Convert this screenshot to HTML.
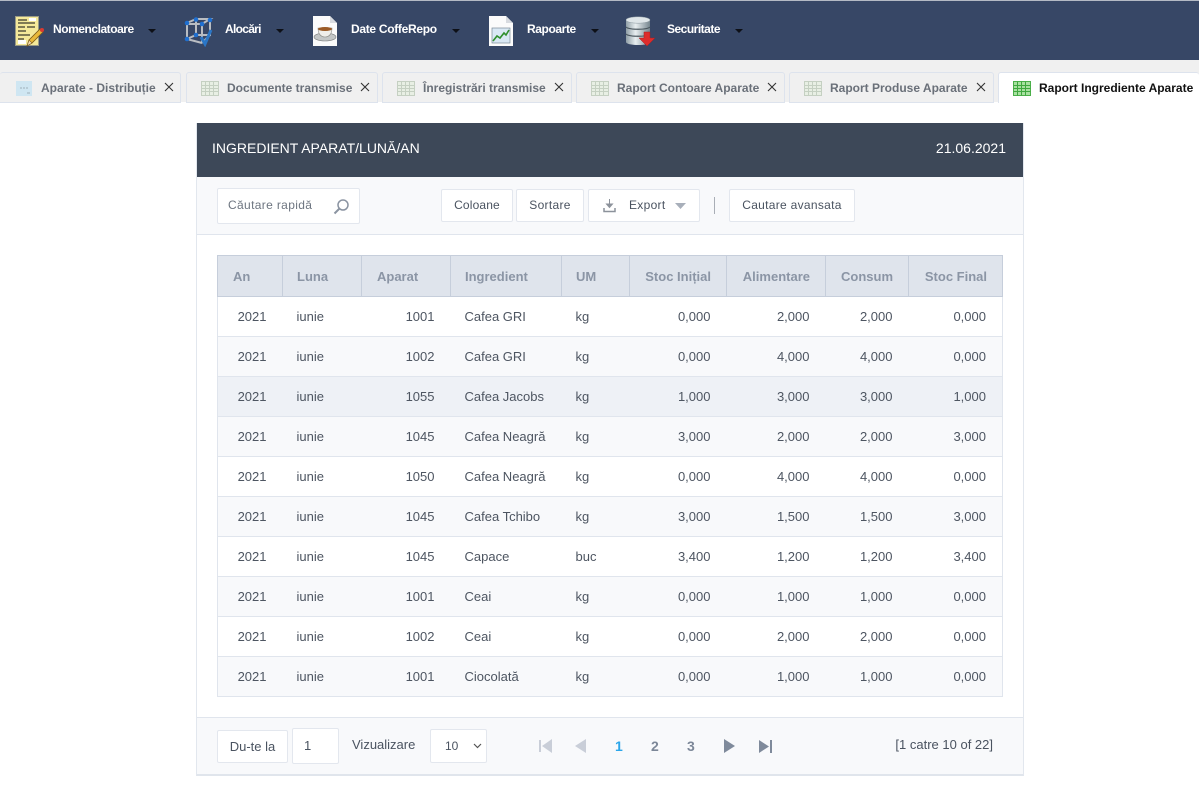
<!DOCTYPE html>
<html><head><meta charset="utf-8"><title>Raport Ingrediente Aparate</title>
<style>
html,body{margin:0;padding:0;width:1199px;height:808px;overflow:hidden;background:#fff;font-family:"Liberation Sans",Arial,sans-serif}
*{box-sizing:border-box}
.a{position:absolute;white-space:nowrap}
#top{position:absolute;left:0;top:0;width:1199px;height:60px;background:#374766;border-top:1px solid #b4bac4}
#strip{position:absolute;left:0;top:60px;width:1199px;height:42px;background:#f0f0f0}
.nav{position:absolute;top:22px;color:#fff;font-size:12px;font-weight:bold;line-height:14px;white-space:nowrap}
.car{position:absolute;top:29px;width:0;height:0;border-left:4px solid transparent;border-right:4px solid transparent;border-top:4px solid #0d1017}
.tab{position:absolute;top:72px;height:31px;background:#f0f0f0;border:1px solid #dde3ed;border-radius:3px 3px 0 0}
.tab.on{background:#fff;border-bottom:0;height:31px}
.tt{position:absolute;top:81px;font-size:12px;font-weight:bold;line-height:14px;color:#6a7079;white-space:nowrap}
.x{position:absolute;top:82px}
.ti{position:absolute;top:81px}
#panel{position:absolute;left:196px;top:123px;width:828px;height:653px;border:1px solid #e2e7ee;border-top:0;border-bottom:2px solid #e0e5ec}
.btn{position:absolute;background:#fff;border:1px solid #e3e7ee;border-radius:2px;font-size:12px;letter-spacing:.3px;color:#4a5360;text-align:center;white-space:nowrap}
table{position:absolute;left:217px;top:255px;width:785px;border-collapse:collapse;table-layout:fixed;font-size:13px}
th{height:41px;background:#dfe4ec;border:1px solid #c6cedb;color:#8b95a5;font-weight:bold;padding:0 15px;text-align:left;font-size:13px}
th.r{text-align:right}
td{height:40px;padding:0 15px;border-top:0;border-bottom:1px solid #e0e5ed;color:#4d5561;white-space:nowrap}
tr td:first-child{border-left:1px solid #e0e5ed}
tr td:last-child{border-right:1px solid #e0e5ed}
td.r{text-align:right;padding-right:16px}
td.l{padding-left:14px}
tr.e td{background:#f8f9fb}
tr.s td{background:#eef1f6}
</style></head><body>
<div id="top"></div>
<div id="strip"></div>

<!-- Nomenclatoare icon -->
<svg class="a" style="left:15px;top:16px" width="29" height="31" viewBox="0 0 29 31"><rect x=".5" y=".5" width="23" height="29" fill="#f4e99a" stroke="#9a9a86"/><path d="M3 4h9M3 7h17M3 11h7M12 11h8M3 15h8M3 19h12M3 23h6" stroke="#3a3a2c" stroke-width="1.2"/><rect x="14" y="2" width="7" height="3" fill="#fff"/><rect x="3" y="24" width="8" height="4" fill="#fff"/><path d="M12 30l2-6L25 13l3 3L17 27z" fill="#e9b93a" stroke="#7a5a18" stroke-width=".8"/><path d="M12 30l2-6 3 3z" fill="#f3dcb0" stroke="#7a5a18" stroke-width=".6"/><circle cx="27" cy="14" r="2" fill="#d83a32"/></svg>
<div class="nav" style="left:53px;letter-spacing:-.46px">Nomenclatoare</div><div class="car" style="left:148px"></div>

<!-- Alocari icon -->
<svg class="a" style="left:184px;top:17px" width="30" height="30" viewBox="0 0 30 30"><g fill="none" stroke="#b9bdc2" stroke-width="2"><path d="M3 6L12 2H26L18 7H3V22L12 18H26V3M12 2V18M18 7V26M3 22L18 26M26 18L18 26"/></g><g fill="#1f6fd0"><circle cx="3" cy="6" r="2.300"/><circle cx="12" cy="2.500" r="2.300"/><circle cx="26" cy="3" r="2.300"/><circle cx="18" cy="7" r="2.300"/><circle cx="3" cy="22" r="2.300"/><circle cx="12" cy="18" r="2.300"/></g><path d="M17 20l4 7 6-14" fill="none" stroke="#2a76c6" stroke-width="3"/></svg>
<div class="nav" style="left:225px;letter-spacing:-.7px">Alocări</div><div class="car" style="left:276px"></div>

<!-- Date icon -->
<svg class="a" style="left:313px;top:16px" width="25" height="30" viewBox="0 0 25 30"><path d="M0 0H17L24 7V30H0z" fill="#fbfbfb"/><path d="M17 0V7H24z" fill="#d8dbe0"/><ellipse cx="12" cy="21" rx="11" ry="4" fill="#c3c6c6" stroke="#7a7c7c" stroke-width=".6"/><path d="M5 12h14c0 6-3 9-7 9s-7-3-7-9z" fill="#efeeea" stroke="#8a8a85" stroke-width=".6"/><ellipse cx="12" cy="13" rx="7" ry="2" fill="#9a5a26"/></svg>
<div class="nav" style="left:351px;letter-spacing:-.3px">Date CoffeRepo</div><div class="car" style="left:452px"></div>

<!-- Rapoarte icon -->
<svg class="a" style="left:489px;top:16px" width="25" height="30" viewBox="0 0 25 30"><path d="M0 0H17L24 7V30H0z" fill="#fbfbfb"/><path d="M17 0V7H24z" fill="#d8dbe0"/><rect x="3" y="12" width="18" height="15" fill="#d9e8f4" stroke="#7b8a96" stroke-width=".7"/><path d="M4 25l4-5 3 2 4-5 2 2 3-5" fill="none" stroke="#2f8f2c" stroke-width="1.600"/></svg>
<div class="nav" style="left:527px;letter-spacing:-.4px">Rapoarte</div><div class="car" style="left:591px"></div>

<!-- Securitate icon -->
<svg class="a" style="left:626px;top:16px" width="30" height="31" viewBox="0 0 30 31"><defs><linearGradient id="g" x1="0" x2="1" y1="0" y2="0"><stop offset="0" stop-color="#8f9ea6"/><stop offset=".4" stop-color="#e8eef0"/><stop offset="1" stop-color="#75858e"/></linearGradient></defs><path d="M0 4C0 0 24 0 24 4V26C24 30 0 30 0 26z" fill="url(#g)"/><ellipse cx="12" cy="4" rx="12" ry="3.200" fill="#dfe6e9" stroke="#8a979e" stroke-width=".5"/><path d="M0 11C3 14 21 14 24 11M0 18C3 21 21 21 24 18" fill="none" stroke="#4a565e" stroke-width="1.200"/><path d="M18 16h6v6h5l-8 8-8-8h5z" fill="#dd2c2c" stroke="#a81e1e" stroke-width=".5"/></svg>
<div class="nav" style="left:667px;letter-spacing:-.5px">Securitate</div><div class="car" style="left:735px"></div>

<!-- Tabs -->
<div class="tab" style="left:0;width:181px;border-left:0"></div>
<div class="tab" style="left:186px;width:192px"></div>
<div class="tab" style="left:382px;width:190px"></div>
<div class="tab" style="left:576px;width:209px"></div>
<div class="tab" style="left:789px;width:205px"></div>
<div class="tab on" style="left:998px;width:201px;border-right:0"></div>

<svg class="ti" style="left:16px" width="16" height="15" viewBox="0 0 16 15"><rect width="16" height="15" fill="#cfe6f2"/><path d="M4 7h2M7 7h2M10 7h2M11 12h3" stroke="#9fb0ba"/></svg>
<div class="tt" style="left:41px">Aparate - Distribuție</div>
<svg class="x" style="left:164px" width="10" height="10"><path d="M1 1l8 8M9 1l-8 8" stroke="#333" stroke-width="1.100"/></svg>

<svg class="ti" style="left:201px" width="18" height="15" viewBox="0 0 18 15"><use href="#gr"/></svg>
<div class="tt" style="left:227px">Documente transmise</div>
<svg class="x" style="left:360px" width="10" height="10"><path d="M1 1l8 8M9 1l-8 8" stroke="#333" stroke-width="1.100"/></svg>

<svg class="ti" style="left:397px" width="18" height="15" viewBox="0 0 18 15"><use href="#gr"/></svg>
<div class="tt" style="left:423px">Înregistrări transmise</div>
<svg class="x" style="left:554px" width="10" height="10"><path d="M1 1l8 8M9 1l-8 8" stroke="#333" stroke-width="1.100"/></svg>

<svg class="ti" style="left:591px" width="18" height="15" viewBox="0 0 18 15"><use href="#gr"/></svg>
<div class="tt" style="left:617px">Raport Contoare Aparate</div>
<svg class="x" style="left:767px" width="10" height="10"><path d="M1 1l8 8M9 1l-8 8" stroke="#333" stroke-width="1.100"/></svg>

<svg class="ti" style="left:804px" width="18" height="15" viewBox="0 0 18 15"><use href="#gr"/></svg>
<div class="tt" style="left:830px">Raport Produse Aparate</div>
<svg class="x" style="left:976px" width="10" height="10"><path d="M1 1l8 8M9 1l-8 8" stroke="#333" stroke-width="1.100"/></svg>

<svg class="ti" style="left:1013px" width="18" height="15" viewBox="0 0 18 15"><rect x=".5" y=".5" width="17" height="14" fill="#a8e0a0" stroke="#4cb04a"/><path d="M.5 4.500h17M.5 7.500h17M.5 10.500h17M4.500 .5v14M8.500 .5v14M12.500 .5v14" stroke="#3fa83f" fill="none"/></svg>
<div class="tt" style="left:1039px;color:#111">Raport Ingrediente Aparate</div>

<svg width="0" height="0" style="position:absolute"><defs><g id="gr"><rect x=".5" y=".5" width="17" height="14" fill="#e8efe4" stroke="#c5d0c2"/><path d="M.5 4.500h17M.5 7.500h17M.5 10.500h17M4.500 .5v14M8.500 .5v14M12.500 .5v14" stroke="#c5d0c2" fill="none"/></g></defs></svg>

<!-- Panel -->
<div id="panel"></div>
<div class="a" style="left:197px;top:123px;width:826px;height:54px;background:#3d4858"></div>
<div class="a" style="left:212px;top:140px;color:#fff;font-size:14px;line-height:16px">INGREDIENT APARAT/LUNĂ/AN</div>
<div class="a" style="right:193px;top:140px;color:#fff;font-size:14px;line-height:16px">21.06.2021</div>
<div class="a" style="left:197px;top:177px;width:826px;height:58px;background:#f8f9fb;border-bottom:1px solid #e0e5ed"></div>

<div class="btn" style="left:217px;top:188px;width:143px;height:36px;line-height:33px;text-align:left;padding-left:10px;color:#6d7580;letter-spacing:.35px">Căutare rapidă</div>
<svg class="a" style="left:333px;top:198px" width="17" height="17" viewBox="0 0 17 17"><circle cx="10" cy="7" r="5" fill="none" stroke="#8b94a2" stroke-width="1.500"/><path d="M6.500 10.500L1.500 15.500" stroke="#8b94a2" stroke-width="2"/></svg>
<div class="btn" style="left:441px;top:189px;width:72px;height:33px;line-height:31px;letter-spacing:.15px">Coloane</div>
<div class="btn" style="left:516px;top:189px;width:68px;height:33px;line-height:31px">Sortare</div>
<div class="btn" style="left:588px;top:189px;width:112px;height:33px;line-height:31px;text-align:left;padding-left:40px">Export</div>
<svg class="a" style="left:603px;top:199px" width="13" height="14" viewBox="0 0 13 14"><path d="M6.500 0v7M3.500 5l3 3.500 3-3.500z" stroke="#8c929b" fill="#8c929b"/><path d="M1 9v3.500h11V9" fill="none" stroke="#8c929b" stroke-width="1.500"/></svg>
<svg class="a" style="left:675px;top:203px" width="11" height="6"><path d="M0 0h11L5.500 6z" fill="#a8afba"/></svg>
<div class="a" style="left:714px;top:197px;width:1px;height:17px;background:#a9aeb6"></div>
<div class="btn" style="left:729px;top:189px;width:126px;height:33px;line-height:31px">Cautare avansata</div>

<table>
<colgroup><col style="width:65px"><col style="width:79px"><col style="width:89px"><col style="width:111px"><col style="width:68px"><col style="width:97px"><col style="width:99px"><col style="width:83px"><col style="width:94px"></colgroup>
<tr><th>An</th><th style="padding-left:14px">Luna</th><th>Aparat</th><th style="padding-left:14px">Ingredient</th><th style="padding-left:14px">UM</th><th class="r">Stoc Inițial</th><th class="r">Alimentare</th><th class="r">Consum</th><th class="r">Stoc Final</th></tr>
<tr><td class="r">2021</td><td class="l">iunie</td><td class="r">1001</td><td class="l">Cafea GRI</td><td class="l">kg</td><td class="r">0,000</td><td class="r">2,000</td><td class="r">2,000</td><td class="r">0,000</td></tr>
<tr class="e"><td class="r">2021</td><td class="l">iunie</td><td class="r">1002</td><td class="l">Cafea GRI</td><td class="l">kg</td><td class="r">0,000</td><td class="r">4,000</td><td class="r">4,000</td><td class="r">0,000</td></tr>
<tr class="s"><td class="r">2021</td><td class="l">iunie</td><td class="r">1055</td><td class="l">Cafea Jacobs</td><td class="l">kg</td><td class="r">1,000</td><td class="r">3,000</td><td class="r">3,000</td><td class="r">1,000</td></tr>
<tr class="e"><td class="r">2021</td><td class="l">iunie</td><td class="r">1045</td><td class="l">Cafea Neagră</td><td class="l">kg</td><td class="r">3,000</td><td class="r">2,000</td><td class="r">2,000</td><td class="r">3,000</td></tr>
<tr><td class="r">2021</td><td class="l">iunie</td><td class="r">1050</td><td class="l">Cafea Neagră</td><td class="l">kg</td><td class="r">0,000</td><td class="r">4,000</td><td class="r">4,000</td><td class="r">0,000</td></tr>
<tr class="e"><td class="r">2021</td><td class="l">iunie</td><td class="r">1045</td><td class="l">Cafea Tchibo</td><td class="l">kg</td><td class="r">3,000</td><td class="r">1,500</td><td class="r">1,500</td><td class="r">3,000</td></tr>
<tr><td class="r">2021</td><td class="l">iunie</td><td class="r">1045</td><td class="l">Capace</td><td class="l">buc</td><td class="r">3,400</td><td class="r">1,200</td><td class="r">1,200</td><td class="r">3,400</td></tr>
<tr class="e"><td class="r">2021</td><td class="l">iunie</td><td class="r">1001</td><td class="l">Ceai</td><td class="l">kg</td><td class="r">0,000</td><td class="r">1,000</td><td class="r">1,000</td><td class="r">0,000</td></tr>
<tr><td class="r">2021</td><td class="l">iunie</td><td class="r">1002</td><td class="l">Ceai</td><td class="l">kg</td><td class="r">0,000</td><td class="r">2,000</td><td class="r">2,000</td><td class="r">0,000</td></tr>
<tr class="e"><td class="r">2021</td><td class="l">iunie</td><td class="r">1001</td><td class="l">Ciocolată</td><td class="l">kg</td><td class="r">0,000</td><td class="r">1,000</td><td class="r">1,000</td><td class="r">0,000</td></tr>
</table>

<!-- Footer -->
<div class="a" style="left:197px;top:717px;width:826px;height:57px;background:#f8f9fb;border-top:1px solid #e0e5ed"></div>
<div class="btn" style="left:217px;top:730px;width:71px;height:33px;line-height:31px;font-size:13px;letter-spacing:0">Du-te la</div>
<div class="btn" style="left:292px;top:728px;width:47px;height:36px;line-height:33px;text-align:left;padding-left:11px;font-size:13px;letter-spacing:0">1</div>
<div class="a" style="left:352px;top:738px;font-size:13px;line-height:14px;color:#4a5360">Vizualizare</div>
<div class="btn" style="left:430px;top:729px;width:57px;height:34px;line-height:33px;text-align:left;padding-left:14px;letter-spacing:0">10</div>
<svg class="a" style="left:473px;top:743px" width="9" height="6"><path d="M1 1l3.500 3.500L8 1" fill="none" stroke="#555" stroke-width="1.200"/></svg>

<svg class="a" style="left:539px;top:739px" width="13" height="14"><path d="M0 1h2v12H0zM13 0v14L3 7z" fill="#c9ced8"/></svg>
<svg class="a" style="left:575px;top:739px" width="11" height="14"><path d="M11 0v14L0 7z" fill="#c9ced8"/></svg>
<div class="a" style="left:615px;top:738px;font-size:14px;font-weight:bold;line-height:16px;color:#2ba6ea">1</div>
<div class="a" style="left:651px;top:738px;font-size:14px;font-weight:bold;line-height:16px;color:#7c8798">2</div>
<div class="a" style="left:687px;top:738px;font-size:14px;font-weight:bold;line-height:16px;color:#7c8798">3</div>
<svg class="a" style="left:724px;top:739px" width="11" height="14"><path d="M0 0v14L11 7z" fill="#7f8a9b"/></svg>
<svg class="a" style="left:759px;top:740px" width="13" height="13"><path d="M0 0v13L10 6.500zM11 0h2v13h-2z" fill="#7f8a9b"/></svg>
<div class="a" style="right:206px;top:738px;font-size:13px;line-height:14px;color:#4a5360">[1 catre 10 of 22]</div>
</body></html>
